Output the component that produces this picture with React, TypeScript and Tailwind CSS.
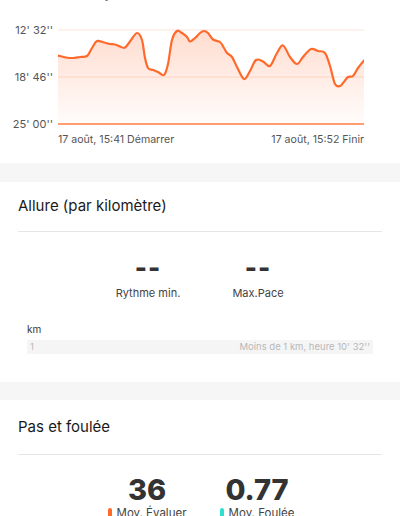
import React from "react";

const font = { fontFamily: "Inter, 'Liberation Sans', sans-serif" };

// pace samples read off the chart (x, y inside the plot box)
const raw: [number, number][] = [
  [58, 55.5], [66, 57.5], [73, 58], [80, 57], [87, 56], [92, 48], [97, 41], [104, 42.5],
  [110, 44], [115, 44.5], [120, 46.5], [125, 47.5], [131, 40], [137, 33], [142, 40],
  [145, 58], [148, 68], [153, 70], [158, 72], [164, 75], [168, 64], [172, 40], [177, 31],
  [182, 33], [187, 37], [190, 41.5], [195, 38], [200, 33], [204, 31], [208, 33], [213, 39.5],
  [220, 42], [224, 48], [227, 53], [232, 57], [237, 67], [244, 79], [250, 71], [256, 60],
  [263, 61.5], [270, 66], [277, 53], [283, 45.5], [290, 57], [297, 64], [303, 57], [311, 49],
  [318, 51], [325, 53], [330, 66], [335, 84], [340, 86], [343, 83], [348, 77], [353, 76],
  [358, 68], [364, 60.5],
];

const OX = 58;
const OY = 26;
const W = 306;
const H = 100;

function smoothPath(pts: [number, number][]) {
  let d = `M ${pts[0][0]} ${pts[0][1]}`;
  for (let i = 0; i < pts.length - 1; i++) {
    const p0 = pts[i - 1] || pts[i];
    const p1 = pts[i];
    const p2 = pts[i + 1];
    const p3 = pts[i + 2] || p2;
    const c1x = p1[0] + (p2[0] - p0[0]) / 6;
    const c1y = p1[1] + (p2[1] - p0[1]) / 6;
    const c2x = p2[0] - (p3[0] - p1[0]) / 6;
    const c2y = p2[1] - (p3[1] - p1[1]) / 6;
    d += ` C ${c1x.toFixed(1)} ${c1y.toFixed(1)}, ${c2x.toFixed(1)} ${c2y.toFixed(1)}, ${p2[0]} ${p2[1]}`;
  }
  return d;
}

function PaceChart() {
  const pts = raw.map(([x, y]) => [x - OX, y - OY] as [number, number]);
  const line = smoothPath(pts);
  const area = `${line} L ${W} 98 L 0 98 Z`;

  return (
    <div className="pt-[26px]">
      <div className="flex">
        <div className="w-[58px] h-[108px] -mt-[3px] pr-[5px] flex flex-col justify-between items-end text-[11px] leading-[14px] text-[#555]">
          <span>12' 32''</span>
          <span>18' 46''</span>
          <span>25' 00''</span>
        </div>
        <svg width={W} height={H} viewBox={`0 0 ${W} ${H}`} className="block">
          <defs>
            <linearGradient id="paceFill" x1="0" y1="0" x2="0" y2="1">
              <stop offset="0%" stopColor="#ff7a45" stopOpacity="0.26" />
              <stop offset="100%" stopColor="#ff7a45" stopOpacity="0.02" />
            </linearGradient>
          </defs>
          <line x1="0" y1="4" x2={W} y2="4" stroke="#fde2d6" strokeWidth="1" />
          <line x1="0" y1="51" x2={W} y2="51" stroke="#fde2d6" strokeWidth="1" />
          <path d={area} fill="url(#paceFill)" />
          <path d={line} fill="none" stroke="#ff6a2c" strokeWidth="2.2" strokeLinecap="round" />
          <line x1="0" y1="98" x2={W} y2="98" stroke="#ff7d42" strokeWidth="1.6" />
        </svg>
      </div>
      <div className="flex justify-between pl-[58px] pr-[36px] mt-[2px] text-[10.6px] leading-[14px] text-[#555]">
        <span>17 août, 15:41 Démarrer</span>
        <span>17 août, 15:52 Finir</span>
      </div>
    </div>
  );
}

function SectionTitle({ children, height }: { children: React.ReactNode; height: string }) {
  return (
    <div className="mx-[18px] border-b border-[#e6e6e6]">
      <h3 className={`${height} flex items-center text-[15px] text-[#1a1a1a] font-normal`}>{children}</h3>
    </div>
  );
}

export default function App() {
  return (
    <div className="w-[400px] h-[516px] overflow-hidden bg-white" style={font}>
      {/* pace chart card, its header scrolled off the top */}
      <div className="h-[163px] overflow-hidden">
        <div className="flex h-0 text-[12px] leading-[16px] text-[#666]">
          <span className="w-[264px] flex justify-center -mt-[14px] whitespace-nowrap">Rythme min.</span>
          <span className="w-[10px] flex justify-center -mt-[14px] whitespace-nowrap">Max.Pace</span>
        </div>
        <PaceChart />
      </div>

      <div className="h-[19px] bg-[#f6f6f6]" />

      {/* Allure */}
      <div className="h-[200px]">
        <SectionTitle height="h-[49px]">Allure (par kilomètre)</SectionTitle>
        <div className="flex justify-center pl-[6px] pt-[20px]">
          <div className="w-[110px] flex flex-col items-center">
            <span className="text-[26px] leading-[32px] font-extrabold text-[#333] tracking-[1px]">--</span>
            <span className="mt-[2px] text-[11px] leading-[14px] text-[#444]">Rythme min.</span>
          </div>
          <div className="w-[110px] flex flex-col items-center">
            <span className="text-[26px] leading-[32px] font-extrabold text-[#333] tracking-[1px]">--</span>
            <span className="mt-[2px] text-[11px] leading-[14px] text-[#444]">Max.Pace</span>
          </div>
        </div>
        <div className="px-[27px] mt-[22px]">
          <div className="text-[10px] leading-[14px] text-[#333]">km</div>
          <div className="mt-[4px] h-[14px] bg-[#f5f5f5] flex items-center justify-between px-[3px] text-[9.5px] text-[#b8b8b8]">
            <span>1</span>
            <span>Moins de 1 km, heure 10' 32''</span>
          </div>
        </div>
      </div>

      <div className="h-[18px] bg-[#f6f6f6]" />

      {/* Pas et foulée */}
      <div>
        <SectionTitle height="h-[54px]">Pas et foulée</SectionTitle>
        <div className="flex justify-center pl-[4px] pt-[19px]">
          <div className="w-[110px] flex flex-col items-center">
            <span className="text-[29px] leading-[32px] font-extrabold text-[#333]">36</span>
            <span className="flex items-center gap-[5px] text-[11.5px] leading-[14px] text-[#444]">
              <span className="w-[4px] h-[10px] rounded-full bg-[#ff6a2c]" />
              Moy. Évaluer
            </span>
          </div>
          <div className="w-[110px] flex flex-col items-center">
            <span className="text-[29px] leading-[32px] font-extrabold text-[#333]">0.77</span>
            <span className="flex items-center gap-[5px] text-[11.5px] leading-[14px] text-[#444]">
              <span className="w-[4px] h-[10px] rounded-full bg-[#2ee0d0]" />
              Moy. Foulée
            </span>
          </div>
        </div>
      </div>
    </div>
  );
}
